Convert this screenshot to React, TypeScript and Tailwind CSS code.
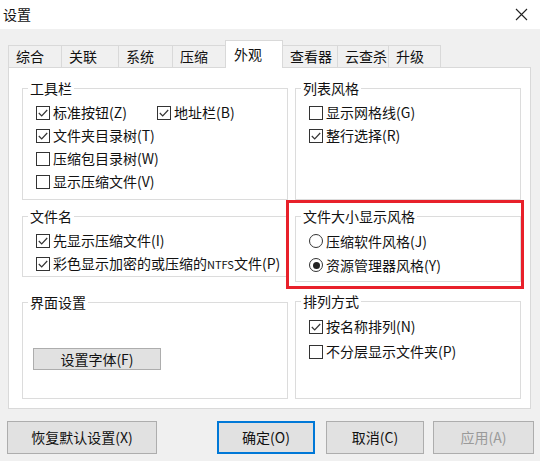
import type { ReactNode } from 'react';

const FONT = { fontFamily: '"Noto Sans CJK SC", "Microsoft YaHei", sans-serif' };

function CheckBox({ checked }: { checked?: boolean }) {
  return (
    <span className="flex h-[14px] w-[14px] shrink-0 items-center justify-center border border-[#333] bg-white">
      {checked && (
        <svg width="12" height="12" viewBox="0 0 12 12">
          <path d="M1.8 6 L4.7 8.9 L10.2 3" fill="none" stroke="#333" strokeWidth="1.2" />
        </svg>
      )}
    </span>
  );
}

function Radio({ checked }: { checked?: boolean }) {
  return (
    <span className="flex h-[14px] w-[14px] shrink-0 items-center justify-center rounded-full border border-[#333] bg-white">
      {checked && <span className="h-[7px] w-[7px] rounded-full bg-[#222]" />}
    </span>
  );
}

function Option({ label, checked, radio }: { label: ReactNode; checked?: boolean; radio?: boolean }) {
  return (
    <div className="flex items-center gap-[3px] whitespace-nowrap">
      {radio ? <Radio checked={checked} /> : <CheckBox checked={checked} />}
      <span>{label}</span>
    </div>
  );
}

function Group({ title, className, children }: { title: string; className: string; children?: ReactNode }) {
  return (
    <fieldset className={`border border-[#dcdcdc] ${className}`}>
      <legend className="ml-[5px] px-[2px] text-[14px] leading-[18px] text-[#111]">{title}</legend>
      {children}
    </fieldset>
  );
}

const tabs = [
  { name: '综合', w: 'w-[54px]' },
  { name: '关联', w: 'w-[58px]' },
  { name: '系统', w: 'w-[55px]' },
  { name: '压缩', w: 'w-[54px]' },
  { name: '外观', w: 'w-[58px]', active: true },
  { name: '查看器', w: 'w-[56px]' },
  { name: '云查杀', w: 'w-[52px]' },
  { name: '升级', w: 'w-[53px]' },
];

export default function App() {
  return (
    <div className="flex h-[461px] w-[540px] flex-col overflow-hidden bg-[#f0f0f0] text-[14px] text-[#111]" style={FONT}>
      {/* title bar */}
      <div className="flex h-[29px] shrink-0 items-center justify-between bg-white pl-[3px] pr-[12px]">
        <span className="text-[14px]">设置</span>
        <svg width="13" height="13" viewBox="0 0 13 13">
          <path d="M1 1 L12 12 M12 1 L1 12" stroke="#222" strokeWidth="1.1" />
        </svg>
      </div>

      {/* tabs */}
      <div className="ml-[8px] mt-[11px] flex h-[27px] items-end">
        {tabs.map((t) =>
          t.active ? (
            <div
              key={t.name}
              className={`relative z-10 -mb-px -ml-px h-[28px] ${t.w} border border-b-0 border-[#d9d9d9] bg-white pl-[8px] pt-[2px] leading-[22px]`}
            >
              {t.name}
            </div>
          ) : (
            <div
              key={t.name}
              className={`-ml-px h-[22px] ${t.w} border border-b-0 border-[#d9d9d9] bg-[#f0f0f0] pl-[7px] leading-[21px] first:ml-0`}
            >
              {t.name}
            </div>
          )
        )}
      </div>

      {/* panel */}
      <div className="ml-[8px] flex h-[342px] w-[523px] gap-[7px] border border-[#d9d9d9] bg-white pl-[13px] pt-[11px]">
        {/* left column */}
        <div className="flex w-[266px] flex-col">
          <Group title="工具栏" className="h-[121px]">
            <div className="flex flex-col pl-[13px] pt-[4px] [&>*]:h-[23px]">
              <div className="flex items-center">
                <div className="w-[121px]">
                  <Option label="标准按钮(Z)" checked />
                </div>
                <Option label="地址栏(B)" checked />
              </div>
              <Option label="文件夹目录树(T)" checked />
              <Option label="压缩包目录树(W)" />
              <Option label="显示压缩文件(V)" />
            </div>
          </Group>
          <Group title="文件名" className="mt-[7px] h-[70px]">
            <div className="flex flex-col pl-[13px] pt-[4px] [&>*]:h-[23px]">
              <Option label="先显示压缩文件(I)" checked />
              <Option
                label={
                  <>
                    彩色显示加密的或压缩的<span className="text-[11px]">NTFS</span>文件(P)
                  </>
                }
                checked
              />
            </div>
          </Group>
          <Group title="界面设置" className="mt-[16px] h-[106px]">
            <button className="ml-[10px] mt-[37px] h-[22px] w-[128px] border border-[#adadad] bg-[#e1e1e1] text-[14px] leading-[20px]">
              设置字体(F)
            </button>
          </Group>
        </div>

        {/* right column */}
        <div className="flex w-[226px] flex-col">
          <Group title="列表风格" className="h-[121px]">
            <div className="flex flex-col pl-[13px] pt-[4px] [&>*]:h-[23px]">
              <Option label="显示网格线(G)" />
              <Option label="整行选择(R)" checked />
            </div>
          </Group>
          <div className="relative mt-[7px]">
            <Group title="文件大小显示风格" className="h-[75px]">
              <div className="flex flex-col pl-[13px] pt-[4px] [&>*]:h-[24px]">
                <Option label="压缩软件风格(J)" radio />
                <Option label="资源管理器风格(Y)" radio checked />
              </div>
            </Group>
            <div className="pointer-events-none absolute -bottom-[7px] -left-[9px] -right-[3px] -top-[7px] border-[3px] border-[#e8202a]" />
          </div>
          <Group title="排列方式" className="mt-[10px] h-[107px]">
            <div className="flex flex-col pl-[13px] pt-[4px] [&>*]:h-[25px]">
              <Option label="按名称排列(N)" checked />
              <Option label="不分层显示文件夹(P)" />
            </div>
          </Group>
        </div>
      </div>

      {/* bottom buttons */}
      <div className="mt-[12px] flex pl-[7px]">
        <button className="h-[33px] w-[150px] border border-[#adadad] bg-[#e1e1e1]">恢复默认设置(X)</button>
        <button className="ml-[60px] h-[33px] w-[98px] border-2 border-[#0078d7] bg-[#e1e1e1]">确定(O)</button>
        <button className="ml-[11px] h-[33px] w-[98px] border border-[#adadad] bg-[#e1e1e1]">取消(C)</button>
        <button className="ml-[9px] h-[33px] w-[101px] border border-[#adadad] bg-[#e1e1e1] text-[#9a9a9a]">应用(A)</button>
      </div>
    </div>
  );
}
